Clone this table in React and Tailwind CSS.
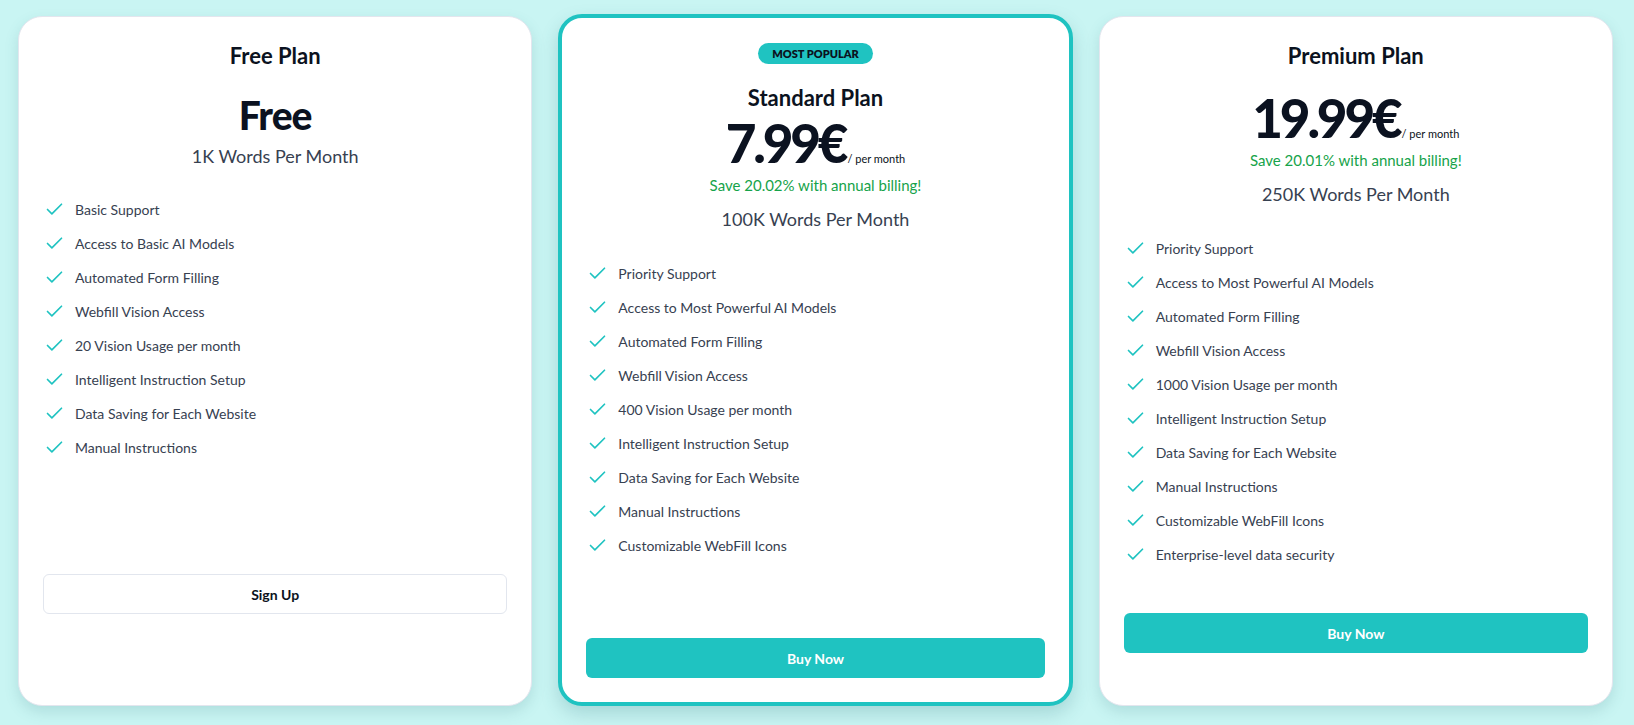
import { Check } from "lucide-react";

const plans = [
  {
    name: "Free Plan",
    price: "Free",
    words: "1K Words Per Month",
    button: "Sign Up",
    features: [
      "Basic Support",
      "Access to Basic AI Models",
      "Automated Form Filling",
      "Webfill Vision Access",
      "20 Vision Usage per month",
      "Intelligent Instruction Setup",
      "Data Saving for Each Website",
      "Manual Instructions",
    ],
  },
  {
    name: "Standard Plan",
    price: "7.99€",
    save: "Save 20.02% with annual billing!",
    words: "100K Words Per Month",
    button: "Buy Now",
    popular: true,
    features: [
      "Priority Support",
      "Access to Most Powerful AI Models",
      "Automated Form Filling",
      "Webfill Vision Access",
      "400 Vision Usage per month",
      "Intelligent Instruction Setup",
      "Data Saving for Each Website",
      "Manual Instructions",
      "Customizable WebFill Icons",
    ],
  },
  {
    name: "Premium Plan",
    price: "19.99€",
    save: "Save 20.01% with annual billing!",
    words: "250K Words Per Month",
    button: "Buy Now",
    features: [
      "Priority Support",
      "Access to Most Powerful AI Models",
      "Automated Form Filling",
      "Webfill Vision Access",
      "1000 Vision Usage per month",
      "Intelligent Instruction Setup",
      "Data Saving for Each Website",
      "Manual Instructions",
      "Customizable WebFill Icons",
      "Enterprise-level data security",
    ],
  },
];

function FeatureList({ items }) {
  return (
    <ul className="h-[382px]">
      {items.map((item) => (
        <li key={item} className="flex h-[34px] items-center gap-[10px] pl-[1px] text-[14px] text-[#374151]">
          <Check size={21} strokeWidth={1.9} className="shrink-0 text-[#1fc3c1]" />
          <span>{item}</span>
        </li>
      ))}
    </ul>
  );
}

function FreeCard({ plan }) {
  return (
    <div className="flex flex-1 flex-col rounded-[24px] border border-[#e3e6ee] bg-white p-6 shadow-[0_6px_14px_rgba(60,120,130,0.18)]">
      <h2 className="text-center text-[22px] font-bold leading-[30px] text-[#0b1220]">{plan.name}</h2>
      <p className="mt-[22px] text-center text-[39px] font-black leading-[44px] tracking-tight text-[#0b1220]">
        {plan.price}
      </p>
      <p className="mt-[5px] text-center text-[18px] leading-[28px] text-[#374151]">{plan.words}</p>
      <div className="mt-[22px]">
        <FeatureList items={plan.features} />
      </div>
      <button
        type="button"
        className="h-10 w-full rounded-md border border-[#e2e6ee] bg-white text-[14px] font-bold text-[#0b1220]"
      >
        {plan.button}
      </button>
    </div>
  );
}

function PaidCard({ plan }) {
  return (
    <div
      className={`flex flex-1 flex-col rounded-[24px] bg-white p-6 ${
        plan.popular
          ? "border-4 border-[#1fc3c1] shadow-[0_8px_18px_rgba(40,110,120,0.22)]"
          : "border border-[#e3e6ee] shadow-[0_6px_14px_rgba(60,120,130,0.18)]"
      }`}
    >
      {plan.popular ? (
        <div className="flex justify-center">
          <span className="mt-px rounded-full bg-[#1fc3c1] px-[14px] text-[11px] font-extrabold leading-[21px] text-[#0b1220]">
            MOST POPULAR
          </span>
        </div>
      ) : null}
      <h2
        className={`text-center text-[22px] font-bold leading-[30px] text-[#0b1220] ${
          plan.popular ? "mt-[19px]" : ""
        }`}
      >
        {plan.name}
      </h2>
      <div
        className={`flex h-[56px] items-baseline justify-center ${plan.popular ? "mt-[2px]" : "mt-[19px]"}`}
      >
        <span className="text-[53px] font-black leading-[56px] tracking-[-0.06em] text-[#0b1220]">{plan.price}</span>
        <span className="ml-[2px] text-[11px] text-[#0b1220]">/ per month</span>
      </div>
      <p className="mt-[3px] text-center text-[15px] leading-[22px] text-[#16a34a]">{plan.save}</p>
      <p className="mt-[9px] text-center text-[18px] leading-[28px] text-[#374151]">{plan.words}</p>
      <div className="mt-[23px]">
        <FeatureList items={plan.features} />
      </div>
      <button
        type="button"
        className="h-10 w-full rounded-md bg-[#1fc3c1] text-[14px] font-bold text-white"
      >
        {plan.button}
      </button>
    </div>
  );
}

export default function App() {
  return (
    <div className="min-h-screen bg-[#c9f5f3] pb-5 pl-[18px] pr-[21px] pt-[14px] font-['Lato',sans-serif]">
      <div className="grid grid-cols-3 gap-[26px]">
        <div className="flex flex-col pt-[2px]">
          <FreeCard plan={plans[0]} />
        </div>
        <div className="flex flex-col">
          <PaidCard plan={plans[1]} />
        </div>
        <div className="flex flex-col pt-[2px]">
          <PaidCard plan={plans[2]} />
        </div>
      </div>
    </div>
  );
}
